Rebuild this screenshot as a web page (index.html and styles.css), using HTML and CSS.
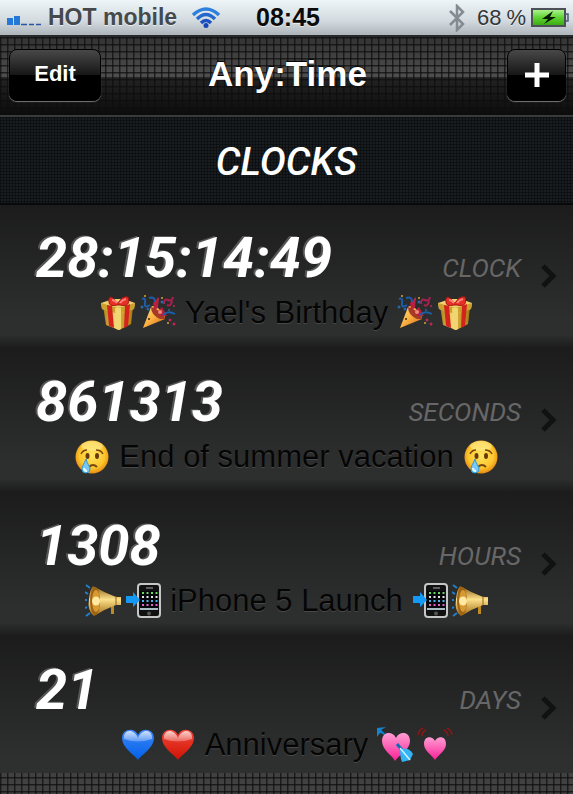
FILE: index.html
```html
<!DOCTYPE html>
<html lang="en">
<head>
<meta charset="utf-8">
<meta name="viewport" content="width=device-width, initial-scale=1">
<title>Any:Time</title>
<link rel="stylesheet" href="styles.css">
</head>
<body>
<svg class="defs" aria-hidden="true">
  <defs>
    <linearGradient id="gold" x1="0" y1="0" x2="1" y2="0"><stop offset="0" stop-color="#a77a12"/><stop offset=".4" stop-color="#f3d674"/><stop offset=".6" stop-color="#e8bd4c"/><stop offset="1" stop-color="#9a6a0c"/></linearGradient>
    <linearGradient id="brass" x1="0" y1="0" x2="0" y2="1"><stop offset="0" stop-color="#8c5a10"/><stop offset=".45" stop-color="#fbe08a"/><stop offset="1" stop-color="#a06a12"/></linearGradient>
    <linearGradient id="cone" x1="0" y1="0" x2="1" y2="1"><stop offset="0" stop-color="#ffe28a"/><stop offset=".5" stop-color="#fbb040"/><stop offset="1" stop-color="#c9591a"/></linearGradient>
    <radialGradient id="face" cx=".5" cy=".45" r=".55"><stop offset="0" stop-color="#ffe561"/><stop offset=".7" stop-color="#fdc62c"/><stop offset="1" stop-color="#e78a12"/></radialGradient>
    <linearGradient id="blue" x1="0" y1="0" x2="0" y2="1"><stop offset="0" stop-color="#3f86f5"/><stop offset="1" stop-color="#0061ea"/></linearGradient>
    <linearGradient id="red" x1="0" y1="0" x2="0" y2="1"><stop offset="0" stop-color="#f0473a"/><stop offset="1" stop-color="#d01203"/></linearGradient>
    <linearGradient id="pink" x1="0" y1="0" x2="0" y2="1"><stop offset="0" stop-color="#ff9ed2"/><stop offset="1" stop-color="#fb1f97"/></linearGradient>
    <linearGradient id="shine" x1="0" y1="0" x2="0" y2="1"><stop offset="0" stop-color="#fff" stop-opacity=".75"/><stop offset="1" stop-color="#fff" stop-opacity=".25"/></linearGradient>
    <linearGradient id="cell" x1="0" y1="0" x2="0" y2="1"><stop offset="0" stop-color="#b6f59a"/><stop offset=".5" stop-color="#5fd431"/><stop offset="1" stop-color="#36a710"/></linearGradient>
  </defs>
  <symbol id="gift" viewBox="0 0 36 36">
    <path d="M3 11 18 15 33 11 31 29 19 35 6 30Z" fill="url(#gold)"/>
    <path d="M18 15 33 11 31 29 19 35Z" fill="#b98b1c" opacity=".45"/>
    <path d="M1 8 13 4 24 4 35 8 34 14 18 19 2 14Z" fill="#efd06c"/>
    <path d="M1 8 18 13 35 8 34 14 18 19 2 14Z" fill="#caa12e"/>
    <path d="M7 10 12 11 14 33 9 31ZM25 11 30 9 28 31 24 33Z" fill="#d3231c"/>
    <path d="M15 13 21 13 21 34 19 35 16 34Z" fill="#f1d571"/>
    <path d="M17 8C12 0 8 1 9 7Q9 12 17 10L20 10C28 12 30 8 28 2Q22 1 19 7Z" fill="#e62f27" stroke="#a81512"/>
    <path d="M12 5Q15 5 17 8M26 4Q22 5 20 8" stroke="#ff837a" stroke-width="2" fill="none"/>
  </symbol>
  <symbol id="party" viewBox="0 0 36 36">
    <path d="M3 33 11 12Q14 9 20 15T25 24Z" fill="url(#cone)"/>
    <path d="M11 12Q16 13 21 18T25 24L20 24Q11 20 11 12Z" fill="#a53b24"/>
    <path d="M14 15 13 8 19 2 18 13ZM17 17 22 12 27 21 21 21Z" fill="#b9203e"/>
    <path d="M2 4Q6 2 5 8T10 10M23 20Q28 15 35 19M9 3Q15 1 15 7" fill="none" stroke="#1c5ea9" stroke-width="2"/>
    <path d="M24 9Q24 3 28 5T33 2M27 10Q31 12 32 6" fill="none" stroke="#a9204f" stroke-width="2"/>
    <g fill="#b52b55"><circle cx="30" cy="25" r="1.5"/><circle cx="34" cy="29" r="1.5"/><circle cx="18" cy="4" r="1"/><circle cx="34" cy="11" r="1"/></g>
    <g fill="#28699f"><circle cx="2" cy="12" r="1.5"/><circle cx="8" cy="14" r="1.5"/><circle cx="22" cy="7" r="1.5"/><circle cx="29" cy="15" r="1"/></g>
    <g fill="#d4a82a"><circle cx="28" cy="28" r="1"/><circle cx="5" cy="1" r="1"/><circle cx="22" cy="3" r="1"/></g>
    <circle cx="9" cy="24" r="1" fill="#42220c"/><circle cx="20" cy="17" r="2" fill="#f08b77"/>
  </symbol>
  <symbol id="cry" viewBox="0 0 36 36">
    <circle cx="18" cy="18" r="16.5" fill="url(#face)"/>
    <ellipse cx="18" cy="7" rx="11" ry="5" fill="#fff5a8" opacity=".5"/>
    <ellipse cx="13.500" cy="17" rx="2" ry="3" fill="#67390b"/><ellipse cx="23" cy="17" rx="2" ry="3" fill="#67390b"/>
    <path d="M7 15Q9 11 13 11M22 11Q27 11 29 15" fill="none" stroke="#79470f" stroke-width="1.500"/>
    <path d="M15 28Q19 24 23 28" fill="none" stroke="#79470f" stroke-width="2"/>
    <path d="M12 20C10 25 8 27 8 30Q8 34 12 34T16 30C16 27 13 25 12 20Z" fill="#75c9f4" stroke="#3498d0"/>
    <path d="M10 29Q10 32 13 32" fill="none" stroke="#e9faff" stroke-width="2"/>
  </symbol>
  <symbol id="horn" viewBox="0 0 36 36">
    <path d="M26 20 29 20 29 31 26 31Z" fill="#c08a23"/>
    <path d="M8 3Q20 10 31 14L36 14 36 22 31 22Q20 26 9 33Q2 28 4 16 5 6 8 3Z" fill="url(#brass)"/>
    <ellipse cx="10" cy="18" rx="5" ry="14" fill="#9d6415"/>
    <ellipse cx="11" cy="18" rx="4" ry="11" fill="#d79a32"/>
    <ellipse cx="11" cy="18" rx="4" ry="4.500" fill="#ffe9a3"/>
    <path d="M31 13 31 22" stroke="#936012"/>
    <path d="M1 2 5 5M0 9 3 11M0 17 2 17M0 25 2 24M1 33 5 30" stroke="#247fca" stroke-width="2"/>
  </symbol>
  <symbol id="phone" viewBox="0 0 36 36">
    <rect x="13" y="1" width="22" height="33" rx="3" fill="#111" stroke="#c6c6c6" stroke-width="2"/>
    <path d="M21 5H28" stroke="#777" stroke-width="1.500"/>
    <rect x="15" y="8" width="18" height="19" fill="#05070c"/>
    <g stroke-width="2" stroke-dasharray="2 2.500"><path d="M17 10H33" stroke="#67d95b"/><path d="M17 14H33" stroke="#e6e2e6"/><path d="M17 18H33" stroke="#4cb5e8"/><path d="M17 22H33" stroke="#e264c0"/></g>
    <path d="M15 26H33" stroke="#a8bec4" stroke-width="2"/>
    <circle cx="24" cy="30.500" r="2" fill="#555"/>
    <path d="M1 13H8V9L15 17 8 24V20H1Z" fill="#1499f5"/>
  </symbol>
  <symbol id="heart" viewBox="0 0 36 36">
    <path d="M18 33C15 28 2 21 2 11 2 1 15 0 18 8 21 0 34 1 34 11 34 21 21 28 18 33Z"/>
    <path d="M4 12C3 2 14 1 18 11 22 1 33 2 32 12Q18 17 4 12Z" fill="url(#shine)"/>
  </symbol>
  <symbol id="arrowheart" viewBox="0 0 36 36">
    <path d="M3 3 12 12" stroke="#0874be" stroke-width="2"/><path d="M0 1 9 0 4 3 7 7 3 6 0 10Z" fill="#1484cf"/>
    <path d="M18 34C15 28 5 23 5 14 5 4 16 4 19 11 22 4 33 4 33 14 33 23 22 28 18 34Z" fill="url(#pink)"/>
    <path d="M20 17 30 29" stroke="#0d6eb5" stroke-width="3"/>
    <path d="M23 22Q32 20 36 27L33 33 25 35Q23 30 23 22Z" fill="#35b4f5"/><path d="M23 21 33 33" stroke="#c8f2ff" stroke-width="1.500"/>
  </symbol>
  <symbol id="beatheart" viewBox="0 0 36 36">
    <path d="M18 33C15 28 7 24 7 17 7 8 16 9 18 14 20 9 29 8 29 17 29 24 21 28 18 33Z" fill="url(#pink)"/>
    <path d="M1 8Q2 3 6 1M5 9Q5 5 9 3M35 8Q34 3 30 1M31 9Q31 5 27 3" stroke="#8d1717" fill="none" stroke-width="1.500"/>
  </symbol>
</svg>

<div class="app">
  <header class="status">
    <div class="carrier">
      <svg class="signal" viewBox="0 0 35 10" aria-hidden="true"><path d="M0 2H6V9H0ZM7 0H13V9H7Z" fill="#2478d8"/><path d="M14 8.500H20M22 8.500H27M29 8.500H34" stroke="#2b56a5" stroke-width="1.500"/></svg>
      <span>HOT mobile</span>
      <svg class="wifi" viewBox="0 0 30 22" aria-hidden="true"><g fill="none" stroke-width="3.500"><path d="M2 8Q15-4 28 8" stroke="#2f7fdc"/><path d="M6 12Q15 3 24 12" stroke="#2568cd"/><path d="M10 16Q15 11 20 16" stroke="#1b52c0"/></g><circle cx="15" cy="18.500" r="2.500" fill="#1446b8"/></svg>
    </div>
    <time>08:45</time>
    <div class="power">
      <svg class="bluetooth" viewBox="0 0 18 28" aria-hidden="true"><path d="M2 7 15 20 9 26V2L15 8 2 21" fill="none" stroke="#858b90" stroke-width="2.500"/></svg>
      <span>68</span><span>%</span>
      <svg class="battery" viewBox="0 0 38 20" aria-hidden="true"><rect x="1" y="1" width="33" height="17" fill="url(#cell)" stroke="#4b5157" stroke-width="2"/><path d="M35 6H37V13H35" fill="#ccd5dc" stroke="#4b5a72" stroke-width="1.500"/><path d="M22 3 11 11 17 11 13 16 25 9 19 9Z" fill="#081b04"/></svg>
    </div>
  </header>

  <nav class="bar">
    <button class="btn" type="button">Edit</button>
    <h1>Any:Time</h1>
    <button class="btn add" type="button" aria-label="Add clock"><svg viewBox="0 0 24 24" aria-hidden="true"><path d="M12 0V24M0 12H24" stroke="#fff" stroke-width="5"/></svg></button>
  </nav>

  <h2 class="section">CLOCKS</h2>

  <main>
    <ul class="list">
      <li><a class="clock" href="#birthday">
        <span class="reading"><span class="count">28:15:14:49</span><span class="unit">CLOCK</span><svg class="chevron" viewBox="0 0 16 24" aria-hidden="true"><path d="M2 2 12 12 2 22"/></svg></span>
        <span class="event"><span class="pair"><svg><use href="#gift"/></svg><svg><use href="#party"/></svg></span><span>Yael's Birthday</span><span class="pair"><svg><use href="#party"/></svg><svg><use href="#gift"/></svg></span></span>
      </a></li>
      <li><a class="clock" href="#vacation">
        <span class="reading"><span class="count">861313</span><span class="unit">SECONDS</span><svg class="chevron" viewBox="0 0 16 24" aria-hidden="true"><path d="M2 2 12 12 2 22"/></svg></span>
        <span class="event"><span class="pair"><svg><use href="#cry"/></svg></span><span>End of summer vacation</span><span class="pair"><svg><use href="#cry"/></svg></span></span>
      </a></li>
      <li><a class="clock" href="#launch">
        <span class="reading"><span class="count">1308</span><span class="unit">HOURS</span><svg class="chevron" viewBox="0 0 16 24" aria-hidden="true"><path d="M2 2 12 12 2 22"/></svg></span>
        <span class="event"><span class="pair"><svg><use href="#horn"/></svg><svg><use href="#phone"/></svg></span><span>iPhone 5 Launch</span><span class="pair"><svg><use href="#phone"/></svg><svg><use href="#horn"/></svg></span></span>
      </a></li>
      <li><a class="clock" href="#anniversary">
        <span class="reading"><span class="count">21</span><span class="unit">DAYS</span><svg class="chevron" viewBox="0 0 16 24" aria-hidden="true"><path d="M2 2 12 12 2 22"/></svg></span>
        <span class="event"><span class="pair"><svg fill="url(#blue)"><use href="#heart"/></svg><svg fill="url(#red)"><use href="#heart"/></svg></span><span>Anniversary</span><span class="pair"><svg><use href="#arrowheart"/></svg><svg><use href="#beatheart"/></svg></span></span>
      </a></li>
    </ul>
  </main>
</div>
</body>
</html>
```
FILE: styles.css
```css
* { box-sizing: border-box; }

:root {
  --mesh: repeating-linear-gradient(90deg, #0d0d0dbb 0 1px, #0d0d0d55 1px 2px, transparent 2px 7px),
          repeating-linear-gradient(180deg, #0d0d0dbb 0 1px, #0d0d0d55 1px 2px, transparent 2px 7px);
  --lcd: Roboto, "Liberation Sans", sans-serif;
}

body {
  margin: 0;
  background: #111;
  font-family: "Liberation Sans", Arial, sans-serif;
}

h1, h2, ul { margin: 0; padding: 0; }

.defs { position: absolute; width: 0; height: 0; }

.app {
  display: flex;
  flex-direction: column;
  min-height: 100vh;
  background: var(--mesh), #414141;
}

.status {
  display: grid;
  grid-template-columns: 1fr auto 1fr;
  align-items: center;
  height: 35px;
  padding: 0 4px 0 7px;
  background: linear-gradient(#eef5f8, #d3dadf 60%, #adb5bb);
  color: #45494d;
  font-size: 23px;
  font-weight: bold;
  text-shadow: 0 1px 0 #fff9;
}

.status time { color: #0b0b0c; font-size: 25px; }

.carrier, .power { display: flex; align-items: center; }
.carrier { gap: 6px; }
.carrier .wifi { margin-left: 8px; }
.power { justify-content: flex-end; gap: 5px; color: #33373a; font-size: 22px; font-weight: normal; }
.power .bluetooth { margin-right: 6px; }

.signal { width: 35px; height: 10px; margin-top: 6px; }
.wifi { width: 30px; height: 22px; }
.bluetooth { width: 18px; height: 28px; }
.battery { width: 38px; height: 20px; }

.bar {
  display: grid;
  grid-template-columns: 1fr auto 1fr;
  align-items: center;
  height: 80px;
  padding: 0 7px 2px 9px;
  border-top: 2px solid #262a2c;
  background: var(--mesh), linear-gradient(#333, #4e4e4e 51%, #232323 52%, #0c0c0c);
}

.bar h1 {
  color: #fff;
  font-size: 35px;
  line-height: 40px;
  padding-bottom: 2px;
  text-shadow: 0 -1px 1px #000;
}

.btn {
  justify-self: start;
  width: 92px;
  height: 52px;
  padding: 0 0 2px;
  border: 1px solid #000;
  border-radius: 8px;
  background: linear-gradient(#484848, #161616 50%, #000 51%);
  box-shadow: 0 1px 1px #777;
  color: #fff;
  font: bold 22px "Liberation Sans", Arial, sans-serif;
}

.btn.add { justify-self: end; width: 59px; }
.btn svg { width: 24px; height: 24px; vertical-align: middle; }

.section {
  height: 90px;
  border-top: 2px solid #393b3a;
  border-bottom: 2px solid #08090b;
  background:
    repeating-linear-gradient(90deg, #080a0c99 0 1px, transparent 1px 3px),
    repeating-linear-gradient(180deg, #080a0c99 0 1px, transparent 1px 3px),
    #191d20;
  color: #fff;
  font: italic 500 39px/90px var(--lcd);
  text-align: center;
}

.list { list-style: none; }

.clock {
  display: block;
  height: 144px;
  padding: 12px 16px 0 36px;
  background: linear-gradient(#1c1c1c, #2d2e2e 80%, #2d2e2e 90%, #1b1b1b);
  color: #050505;
  text-decoration: none;
}

.list li:last-child .clock {
  height: 136px;
  background: linear-gradient(#1c1c1c, #2e2f2f 90%);
}

.reading { display: flex; align-items: baseline; height: 76px; }

.count {
  flex: 1;
  color: #fff;
  font: italic bold 56px/82px var(--lcd);
  text-shadow: -2px -1px 0 #555;
}

.unit { color: #676767; font: italic 26px/32px var(--lcd); }

.chevron {
  align-self: flex-end;
  width: 16px;
  height: 24px;
  margin-left: 20px;
  margin-bottom: 5px;
  fill: none;
  stroke: #111;
  stroke-width: 5;
}

.event {
  display: flex;
  justify-content: center;
  align-items: center;
  gap: 9px;
  height: 40px;
  margin-left: -20px;
  font-size: 31px;
  line-height: 40px;
  white-space: nowrap;
  text-shadow: 0 1px 0 #484848;
}

.pair { display: flex; gap: 4px; }
.pair svg { width: 36px; height: 36px; }
```
